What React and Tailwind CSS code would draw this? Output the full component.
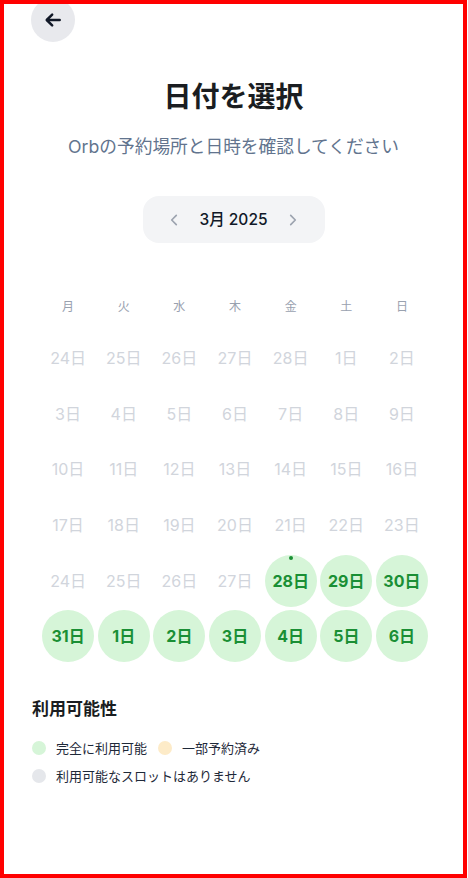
import React from "react";

const weekDays = ["月", "火", "水", "木", "金", "土", "日"];

// calendar grid for March 2025, Monday first
const days = [
  ...[24, 25, 26, 27, 28].map((d) => ({ d, ok: false })),
  ...Array.from({ length: 31 }, (_, i) => ({ d: i + 1, ok: i + 1 >= 28, today: i + 1 === 28 })),
  ...[1, 2, 3, 4, 5, 6].map((d) => ({ d, ok: true })),
];

const Chevron = ({ dir }) => (
  <svg width="22" height="22" viewBox="0 0 24 24" fill="none" stroke="#9ca3af" strokeWidth="1.8" strokeLinecap="round" strokeLinejoin="round">
    {dir === "left" ? <path d="M14.5 7 9.5 12l5 5" /> : <path d="M9.5 7l5 5-5 5" />}
  </svg>
);

export default function App() {
  return (
    <div className="w-[467px] h-[878px] border-4 border-[#ff0000] bg-white overflow-hidden font-['Inter','Noto_Sans_CJK_JP',sans-serif]">
      <div className="px-7">
        {/* back */}
        <button className="mt-[-6px] ml-[-1px] w-11 h-11 rounded-full bg-[#e8e9ed] flex items-center justify-center">
          <svg width="20" height="20" viewBox="0 0 24 24" fill="none" stroke="#111827" strokeWidth="3" strokeLinecap="round" strokeLinejoin="round">
            <path d="M20 12H5" />
            <path d="M11 5.5 4.5 12l6.5 6.5" />
          </svg>
        </button>

        <h1 className="mt-[37px] text-center text-[28px] leading-[36px] font-bold text-[#1a1d21]">日付を選択</h1>
        <p className="mt-[19px] text-center text-[17.7px] leading-[26px] text-slate-500">Orbの予約場所と日時を確認してください</p>

        {/* month switch */}
        <div className="mt-[36px] mx-auto w-[182px] h-[47px] rounded-2xl bg-gray-100 flex items-center justify-between px-5">
          <Chevron dir="left" />
          <span className="text-[15.5px] font-medium text-gray-900">3月 2025</span>
          <Chevron dir="right" />
        </div>

        {/* calendar */}
        <div className="mt-[54px] ml-[10px] w-[386px]">
          <div className="grid grid-cols-7 gap-x-[3.5px]">
            {weekDays.map((w) => (
              <div key={w} className="text-center text-[12px] leading-5 text-gray-400">{w}</div>
            ))}
          </div>
          <div className="mt-[15px] grid grid-cols-7 gap-[3.5px]">
            {days.map((x, i) => (
              <div
                key={i}
                className={`relative aspect-square rounded-full flex items-center justify-center text-[16px] ${
                  x.ok ? "bg-[#d6f5d8] text-[#1a8f35] font-bold" : "text-gray-300 font-normal"
                }`}
              >
                {x.today && (
                  <span className="absolute top-[1px] left-1/2 -translate-x-1/2 w-1 h-1 rounded-full bg-[#1a8f35]" />
                )}
                {x.d}日
              </div>
            ))}
          </div>
        </div>

        {/* legend */}
        <h2 className="mt-[35px] text-[17px] leading-6 font-bold text-[#1a1d21]">利用可能性</h2>
        <div className="mt-[17px] flex flex-wrap gap-x-[11px] gap-y-2 text-[13px] leading-5 text-gray-800">
          <div className="flex items-center gap-[10px]">
            <span className="w-3.5 h-3.5 rounded-full bg-[#d6f5d8]" />
            完全に利用可能
          </div>
          <div className="flex items-center gap-[10px]">
            <span className="w-3.5 h-3.5 rounded-full bg-[#fdebc8]" />
            一部予約済み
          </div>
          <div className="flex items-center gap-[10px]">
            <span className="w-3.5 h-3.5 rounded-full bg-[#e5e7eb]" />
            利用可能なスロットはありません
          </div>
        </div>
      </div>
    </div>
  );
}
